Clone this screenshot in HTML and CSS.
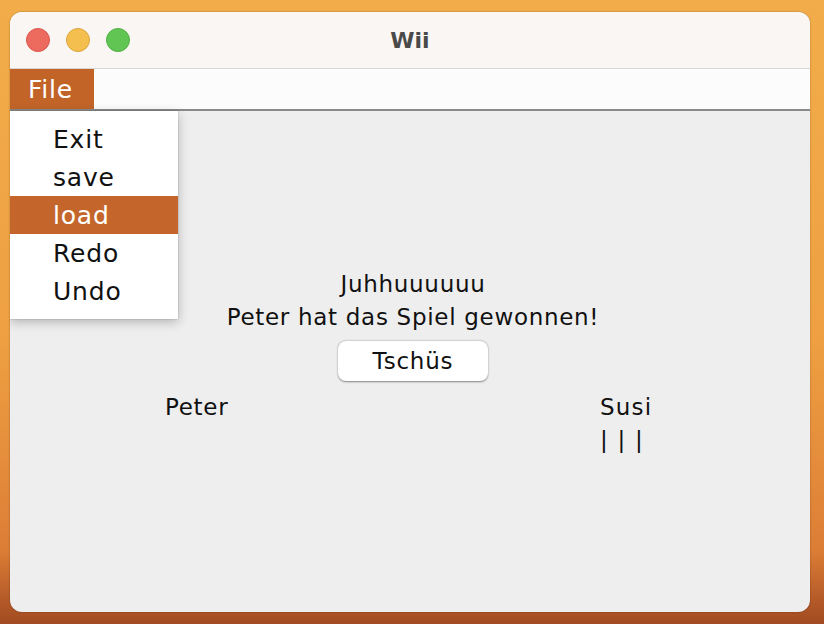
FILE: index.html
```html
<!DOCTYPE html>
<html>
<head>
<meta charset="utf-8">
<link rel="stylesheet" href="styles.css">
</head>
<body>
<div class="window">
  <div class="titlebar">
    <div class="lights">
      <span class="light red"></span>
      <span class="light yellow"></span>
      <span class="light green"></span>
    </div>
    <div class="title">Wii</div>
  </div>
  <div class="menubar">
    <div class="menu active">File</div>
  </div>
  <div class="content">
    <div class="message">
      <div>Juhhuuuuuu</div>
      <div>Peter hat das Spiel gewonnen!</div>
    </div>
    <button class="btn">Tschüs</button>
    <div class="players">
      <div class="player p1">Peter</div>
      <div class="player p2">Susi<br>| | |</div>
    </div>
    <div class="dropdown">
      <div class="item">Exit</div>
      <div class="item">save</div>
      <div class="item selected">load</div>
      <div class="item">Redo</div>
      <div class="item">Undo</div>
    </div>
  </div>
</div>
</body>
</html>
```
FILE: styles.css
```css
html, body { margin: 0; padding: 0; }
body {
  width: 824px; height: 624px; overflow: hidden;
  background: linear-gradient(180deg, #f2ad4a 0%, #ee9f42 55%, #dc7e36 88%, #a24a22 100%);
  font-family: "DejaVu Sans", sans-serif;
  padding: 12px 0 0 10px;
  box-sizing: border-box;
}
.window {
  width: 800px; height: 600px;
  border-radius: 12px;
  overflow: hidden;
  background: #eeeeee;
  display: flex; flex-direction: column;
  box-shadow: 0 0 2px rgba(0,0,0,0.35);
}
.titlebar {
  height: 56px; flex: none;
  background: #faf6f3;
  border-bottom: 1px solid #d9d6d4;
  position: relative;
  display: flex; align-items: center; justify-content: center;
}
.lights { position: absolute; left: 16px; top: 16px; display: flex; gap: 16px; }
.light { width: 24px; height: 24px; border-radius: 50%; box-sizing: border-box; }
.red { background: #ed6a5e; border: 1px solid #d9574c; }
.yellow { background: #f5bf4f; border: 1px solid #d9a53e; }
.green { background: #61c554; border: 1px solid #4fae43; }
.title { font-weight: bold; font-size: 22px; color: #4a4a4a; }
.menubar {
  height: 40px; flex: none;
  background: #fcfcfc;
  border-bottom: 2px solid #8a8a8a;
  display: flex;
}
.menu { padding: 0 18px; font-size: 25px; letter-spacing: 0.8px; line-height: 42px; color: #fff; }
.menu.active { background: #c26428; width: 84px; box-sizing: border-box; }
.content { flex: 1; position: relative; display: flex; flex-direction: column; align-items: center; padding-top: 157px; padding-left: 6px; }
.message { text-align: center; font-size: 23px; letter-spacing: 0.7px; line-height: 33px; color: #111; }
.btn {
  margin-top: 7px;
  width: 150px; height: 40px;
  background: #fff; border: none; border-radius: 8px;
  box-shadow: 0 0.5px 2px rgba(0,0,0,0.45);
  font-family: "DejaVu Sans", sans-serif; font-size: 23px; letter-spacing: 0.8px; color: #111;
}
.players { align-self: stretch; position: relative; margin-top: 10px; font-size: 23px; letter-spacing: 0.7px; line-height: 33px; color: #111; }
.player { position: absolute; top: 0; }
.p1 { left: 149px; }
.p2 { left: 584px; letter-spacing: 1.2px; }
.dropdown {
  position: absolute; left: 0; top: 0;
  width: 168px; padding: 9px 0;
  background: #fff;
  box-shadow: 0 3px 10px rgba(0,0,0,0.25), 0 0 1px rgba(0,0,0,0.4);
}
.item { height: 38px; line-height: 40px; padding-left: 43px; font-size: 25px; letter-spacing: 0.8px; color: #111; }
.item.selected { background: #c4662b; color: #fff; }
```
